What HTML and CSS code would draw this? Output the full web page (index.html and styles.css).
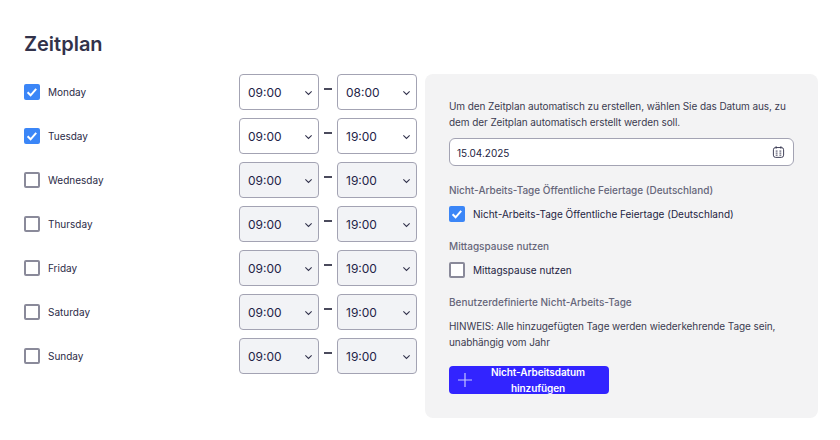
FILE: index.html
```html
<!DOCTYPE html>
<html lang="de">
<head>
<meta charset="utf-8">
<title>Zeitplan</title>
<link rel="stylesheet" href="styles.css">
</head>
<body>
<h1 class="title">Zeitplan</h1>
<main class="layout">
  <section class="days">
    <div class="day"><label class="check"><span class="box on"><svg viewBox="0 0 16 16"><path d="M3.6 8.3l3 3 5.6-6.4"/></svg></span><span class="day-name">Monday</span></label><div class="times"><span class="time">09:00<svg viewBox="0 0 10 6"><path d="M1.5 1.2l3.5 3.4 3.5-3.4"/></svg></span><span class="dash"></span><span class="time">08:00<svg viewBox="0 0 10 6"><path d="M1.5 1.2l3.5 3.4 3.5-3.4"/></svg></span></div></div>
    <div class="day"><label class="check"><span class="box on"><svg viewBox="0 0 16 16"><path d="M3.6 8.3l3 3 5.6-6.4"/></svg></span><span class="day-name">Tuesday</span></label><div class="times"><span class="time">09:00<svg viewBox="0 0 10 6"><path d="M1.5 1.2l3.5 3.4 3.5-3.4"/></svg></span><span class="dash"></span><span class="time">19:00<svg viewBox="0 0 10 6"><path d="M1.5 1.2l3.5 3.4 3.5-3.4"/></svg></span></div></div>
    <div class="day"><label class="check"><span class="box"></span><span class="day-name">Wednesday</span></label><div class="times"><span class="time off">09:00<svg viewBox="0 0 10 6"><path d="M1.5 1.2l3.5 3.4 3.5-3.4"/></svg></span><span class="dash"></span><span class="time off">19:00<svg viewBox="0 0 10 6"><path d="M1.5 1.2l3.5 3.4 3.5-3.4"/></svg></span></div></div>
    <div class="day"><label class="check"><span class="box"></span><span class="day-name">Thursday</span></label><div class="times"><span class="time off">09:00<svg viewBox="0 0 10 6"><path d="M1.5 1.2l3.5 3.4 3.5-3.4"/></svg></span><span class="dash"></span><span class="time off">19:00<svg viewBox="0 0 10 6"><path d="M1.5 1.2l3.5 3.4 3.5-3.4"/></svg></span></div></div>
    <div class="day"><label class="check"><span class="box"></span><span class="day-name">Friday</span></label><div class="times"><span class="time off">09:00<svg viewBox="0 0 10 6"><path d="M1.5 1.2l3.5 3.4 3.5-3.4"/></svg></span><span class="dash"></span><span class="time off">19:00<svg viewBox="0 0 10 6"><path d="M1.5 1.2l3.5 3.4 3.5-3.4"/></svg></span></div></div>
    <div class="day"><label class="check"><span class="box"></span><span class="day-name">Saturday</span></label><div class="times"><span class="time off">09:00<svg viewBox="0 0 10 6"><path d="M1.5 1.2l3.5 3.4 3.5-3.4"/></svg></span><span class="dash"></span><span class="time off">19:00<svg viewBox="0 0 10 6"><path d="M1.5 1.2l3.5 3.4 3.5-3.4"/></svg></span></div></div>
    <div class="day"><label class="check"><span class="box"></span><span class="day-name">Sunday</span></label><div class="times"><span class="time off">09:00<svg viewBox="0 0 10 6"><path d="M1.5 1.2l3.5 3.4 3.5-3.4"/></svg></span><span class="dash"></span><span class="time off">19:00<svg viewBox="0 0 10 6"><path d="M1.5 1.2l3.5 3.4 3.5-3.4"/></svg></span></div></div>
  </section>
  <aside class="panel">
    <p class="text first">Um den Zeitplan automatisch zu erstellen, wählen Sie das Datum aus, zu dem der Zeitplan automatisch erstellt werden soll.</p>
    <div class="date"><span class="date-value">15.04.2025</span><svg viewBox="0 0 14 14"><rect x="1.5" y="2.2" width="11" height="10.6" rx="2.4"/><path d="M4.4 0.8v2.6M9.6 0.8v2.6"/><path class="dots" d="M4 6h2M8 6h2M4 8.2h2M8 8.2h2M4 10.4h2M8 10.4h2"/></svg></div>
    <h2 class="label holiday">Nicht-Arbeits-Tage Öffentliche Feiertage (Deutschland)</h2>
    <label class="check panel-check"><span class="box on"><svg viewBox="0 0 16 16"><path d="M3.6 8.3l3 3 5.6-6.4"/></svg></span><span>Nicht-Arbeits-Tage Öffentliche Feiertage (Deutschland)</span></label>
    <h2 class="label">Mittagspause nutzen</h2>
    <label class="check panel-check"><span class="box"></span><span>Mittagspause nutzen</span></label>
    <h2 class="label">Benutzerdefinierte Nicht-Arbeits-Tage</h2>
    <p class="text note">HINWEIS: Alle hinzugefügten Tage werden wiederkehrende Tage sein, unabhängig vom Jahr</p>
    <button class="add" type="button"><svg viewBox="0 0 16 16"><path d="M8 1v14M1 8h14"/></svg><span>Nicht-Arbeitsdatum hinzufügen</span></button>
  </aside>
</main>
</body>
</html>
```
FILE: styles.css
```css
* { box-sizing: border-box; }
html, body { margin: 0; height: 100%; }
body {
  width: 840px;
  height: 440px;
  overflow: hidden;
  padding: 33px 22px 0 24px;
  background: #fff;
  color: #232342;
  font-family: Inter, "Noto Sans", sans-serif;
}
.title {
  margin: 0 0 18px;
  font-size: 20px;
  line-height: 23px;
  font-weight: 600;
  color: #32324a;
}
.layout { display: flex; gap: 8px; align-items: flex-start; }
.days { width: 393px; display: flex; flex-direction: column; gap: 8px; }
.day { display: flex; align-items: center; justify-content: space-between; height: 36px; }
.check { display: flex; align-items: center; gap: 8px; font-size: 10px; line-height: 16px; }
.day-name { color: #2b2b47; }
.box {
  width: 16px;
  height: 16px;
  border: 2px solid #8a8a9a;
  border-radius: 2px;
  background: #fff;
  flex: none;
}
.box.on { border: 0; background: #3b86f7; }
.box svg { display: block; width: 16px; height: 16px; }
.box path { fill: none; stroke: #fff; stroke-width: 2; }
.times { display: flex; gap: 0; }
.time {
  position: relative;
  width: 80px;
  height: 36px;
  padding-left: 8px;
  display: flex;
  align-items: center;
  border: 1px solid #a3a3b3;
  border-radius: 4px;
  background: #fff;
  font-size: 12px;
  color: #232347;
}
.time.off { background: #f2f3f6; }
.time svg {
  position: absolute;
  right: 5px;
  top: 15px;
  width: 9px;
  height: 6px;
  fill: none;
  stroke: #33334d;
  stroke-width: 1.2;
}
.dash {
  width: 8px;
  height: 2.5px;
  margin: 13.5px 5px 0;
  background: #4a4a5c;
}
.panel {
  width: 393px;
  height: 344px;
  padding: 24px;
  background: #f3f3f4;
  border-radius: 8px;
}
.text {
  margin: 0;
  font-size: 10px;
  letter-spacing: -0.085px;
  line-height: 16px;
  color: #3b3b50;
}
.date {
  height: 28px;
  margin-top: 8px;
  padding: 0 8px 0 7px;
  display: flex;
  align-items: center;
  justify-content: space-between;
  background: #fff;
  border: 1px solid #a3a3b3;
  border-radius: 6px;
  font-size: 10px;
  color: #232342;
}
.date-value { padding-top: 2px; line-height: 14px; }
.date svg { width: 13px; height: 14px; fill: none; stroke: #33334d; stroke-width: 1; }
.label {
  margin: 0;
  font-size: 10px;
  line-height: 16px;
  font-weight: 500;
  color: #66667a;
}
.holiday { margin-top: 16px; }
.panel-check { height: 16px; margin: 8px 0 16px; }
.note { margin-top: 8px; }
.add {
  width: 160px;
  height: 28px;
  margin-top: 16px;
  padding: 0 14px 0 8px;
  display: flex;
  align-items: center;
  border: 0;
  border-radius: 4px;
  background: #3224ff;
  color: #fff;
  font-family: inherit;
  font-size: 10px;
  font-weight: 600;
  letter-spacing: -0.1px;
  line-height: 16px;
  text-align: center;
}
.add svg { width: 16px; height: 16px; flex: none; fill: none; stroke: #c5c5ff; stroke-width: 1.2; }
.add span { flex: 1; padding-left: 8px; word-break: keep-all; }
```
